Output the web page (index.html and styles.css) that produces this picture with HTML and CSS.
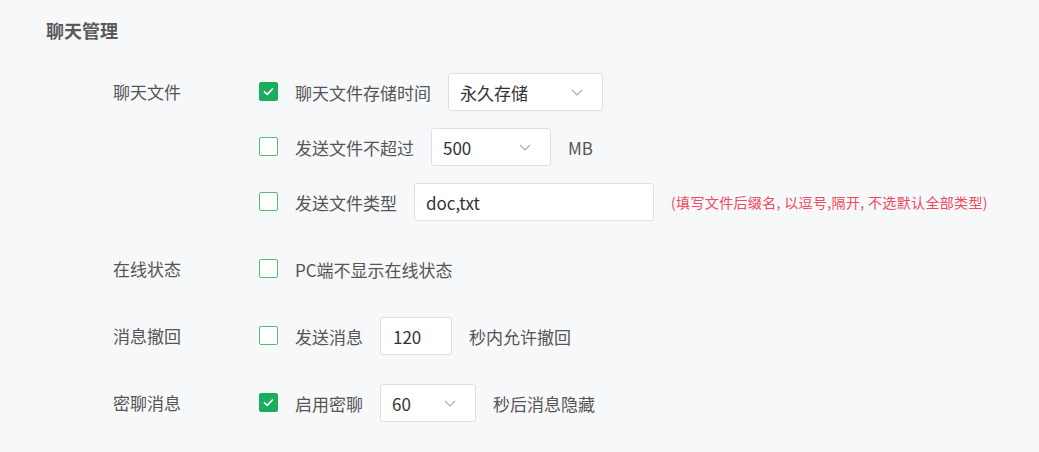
FILE: index.html
```html
<!DOCTYPE html>
<html lang="zh">
<head>
<meta charset="utf-8">
<title>聊天管理</title>
<link rel="stylesheet" href="styles.css">
</head>
<body>
<div class="page">
  <h2 class="title">聊天管理</h2>
  <div class="form">
    <div class="group">
      <div class="label">聊天文件</div>
      <div class="items">
        <div class="item">
          <span class="cb checked"><svg viewBox="0 0 19 19" width="19" height="19"><path d="M5.5 9.8 L8.3 12.3 L13.3 7" fill="none" stroke="#fff" stroke-width="1.8" stroke-linecap="round" stroke-linejoin="round"/></svg></span>
          <span class="text">聊天文件存储时间</span>
          <div class="select w154"><span>永久存储</span><svg class="chev" viewBox="0 0 12 7" width="12" height="7"><path d="M1 1 L6 6 L11 1" fill="none" stroke="#a8abb2" stroke-width="1.2"/></svg></div>
        </div>
        <div class="item">
          <span class="cb"></span>
          <span class="text">发送文件不超过</span>
          <div class="select w120"><span>500</span><svg class="chev" viewBox="0 0 12 7" width="12" height="7"><path d="M1 1 L6 6 L11 1" fill="none" stroke="#a8abb2" stroke-width="1.2"/></svg></div>
          <span class="after">MB</span>
        </div>
        <div class="item">
          <span class="cb"></span>
          <span class="text">发送文件类型</span>
          <div class="input w240">doc,txt</div>
          <span class="hint">(填写文件后缀名, 以逗号,隔开, 不选默认全部类型)</span>
        </div>
      </div>
    </div>
    <div class="group">
      <div class="label">在线状态</div>
      <div class="items">
        <div class="item">
          <span class="cb"></span>
          <span class="text">PC端不显示在线状态</span>
        </div>
      </div>
    </div>
    <div class="group">
      <div class="label">消息撤回</div>
      <div class="items">
        <div class="item">
          <span class="cb"></span>
          <span class="text">发送消息</span>
          <div class="input w72">120</div>
          <span class="after">秒内允许撤回</span>
        </div>
      </div>
    </div>
    <div class="group">
      <div class="label">密聊消息</div>
      <div class="items">
        <div class="item">
          <span class="cb checked"><svg viewBox="0 0 19 19" width="19" height="19"><path d="M5.5 9.8 L8.3 12.3 L13.3 7" fill="none" stroke="#fff" stroke-width="1.8" stroke-linecap="round" stroke-linejoin="round"/></svg></span>
          <span class="text">启用密聊</span>
          <div class="select w96"><span>60</span><svg class="chev" viewBox="0 0 12 7" width="12" height="7"><path d="M1 1 L6 6 L11 1" fill="none" stroke="#a8abb2" stroke-width="1.2"/></svg></div>
          <span class="after">秒后消息隐藏</span>
        </div>
      </div>
    </div>
  </div>
</div>
</body>
</html>
```
FILE: styles.css
```css
html, body {
  margin: 0;
  padding: 0;
  background: #f7f8fa;
}
body {
  font-family: "Noto Sans CJK SC", "Noto Sans", sans-serif;
  color: #555;
  width: 1039px;
  height: 452px;
  overflow: hidden;
}
.page {
  padding: 18px 0 0 46px;
}
.title {
  margin: 0;
  font-size: 18px;
  line-height: 24px;
  font-weight: 600;
  color: #5a5a5a;
}
.form {
  margin-top: 31px;
  margin-left: 67px;
  display: flex;
  flex-direction: column;
  gap: 29px;
}
.group {
  display: grid;
  grid-template-columns: 146px 1fr;
}
.label {
  font-size: 17px;
  line-height: 38px;
  height: 38px;
  color: #555;
}
.items {
  display: flex;
  flex-direction: column;
  gap: 17px;
}
.item {
  display: flex;
  align-items: center;
  height: 38px;
  font-size: 17px;
}
.cb {
  width: 19px;
  height: 19px;
  box-sizing: border-box;
  border: 1px solid #55bd73;
  border-radius: 2px;
  background: #fff;
  margin: 9px 17px 10px 0;
  align-self: flex-start;
  flex: none;
  display: flex;
}
.cb.checked {
  border-color: #1aad5b;
  background: #1aad5b;
}
.cb.checked svg {
  margin: -1px;
}
.text {
  font-size: 17px;
  color: #555;
  margin-right: 17px;
  white-space: nowrap;
}
.select, .input {
  box-sizing: border-box;
  height: 38px;
  background: #fff;
  border: 1px solid #dcdfe6;
  border-radius: 3px;
  display: flex;
  align-items: center;
  padding: 0 12px 0 11px;
  font-size: 17px;
  color: #333;
  flex: none;
}
.select {
  justify-content: space-between;
}
.w154 { width: 155px; }
.w120 { width: 120px; }
.w96 { width: 96px; }
.w240 { width: 240px; }
.w72 { width: 72px; }
.input.w72 { padding-left: 12px; }
.chev {
  margin-right: 7px;
}
.after {
  margin-left: 17px;
  font-size: 17px;
  color: #555;
  white-space: nowrap;
}
.hint {
  margin-left: 17px;
  font-size: 14px;
  letter-spacing: 0.35px;
  color: #f04a5e;
  white-space: nowrap;
}
```
